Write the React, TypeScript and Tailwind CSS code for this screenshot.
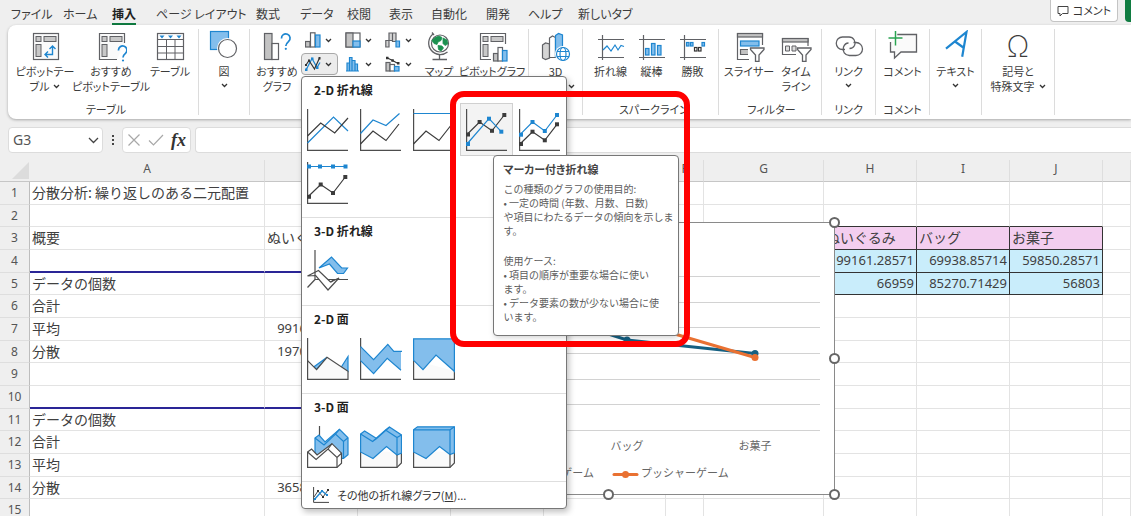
import type { ReactNode } from "react";

const GRAY = "#606165";
const BLUE = "#1e86d0";
const FILL = "#83beec";

/* ---------- small helpers ---------- */

function Chevron({ className = "" }: { className?: string }) {
  return (
    <svg width="7" height="5" viewBox="0 0 7 5" className={className} aria-hidden="true">
      <path d="M1 1l2.5 2.5L6 1" fill="none" stroke="#333" strokeWidth="1.3" />
    </svg>
  );
}

function Icon({ children, size = 32 }: { children: ReactNode; size?: number }) {
  return (
    <svg
      width={size}
      height={size}
      viewBox={`0 0 ${size} ${size}`}
      fill="none"
      stroke={GRAY}
      strokeWidth="1.2"
      className="block shrink-0"
      aria-hidden="true"
    >
      {children}
    </svg>
  );
}

/* ---------- ribbon icons ---------- */

const pivotBase = (
  <>
    <rect x="7" y="6.5" width="5" height="5" fill="#c8c8c8" strokeWidth="1" />
    <rect x="15" y="6.5" width="12" height="5" fill="#c8c8c8" strokeWidth="1" />
    <rect x="7" y="14.5" width="5" height="12" fill="#c8c8c8" strokeWidth="1" />
  </>
);

const PivotIcon = () => (
  <Icon>
    <rect x="4.5" y="3.5" width="25" height="26" fill="#fafafa" />
    {pivotBase}
    <path d="M23.5 16v8.5h-7.5M20.5 19l3-3 3 3M19 21.5l-3 3 3 3" stroke={BLUE} strokeWidth="1.4" />
  </Icon>
);

const RecPivotIcon = () => (
  <Icon>
    <path d="M22 29.5H4.5V3.5H29.5V13" fill="#fafafa" stroke="none" />
    <path d="M22 29.5H4.5V3.5H29.5V13" />
    {pivotBase}
    <path d="M23.5 20.5a4.200 4.200 0 1 1 7 2.800c-1.600 1.300-2.500 2-2.500 4.200" stroke={BLUE} strokeWidth="1.7" />
    <circle cx="28" cy="30.5" r="1.1" fill={BLUE} stroke="none" />
  </Icon>
);

const TableIcon = () => (
  <Icon>
    <rect x="3.5" y="3.5" width="26" height="26" fill="#fff" />
    <path d="M3.5 9.5h26M3.5 16.5h26M3.5 23h26M12.5 9.5v20M21 9.5v20" strokeWidth="1" />
    <path d="M5.5 5.500h5L8 8.500zM14 5.500h5l-2.500 3zM22.500 5.500h5l-2.500 3z" fill={BLUE} stroke="none" />
  </Icon>
);

const ShapesIcon = () => (
  <Icon>
    <rect x="2.5" y="1.5" width="18" height="18" fill={FILL} stroke={BLUE} />
    <circle cx="19.5" cy="18.5" r="10.5" fill="#fff" stroke="none" />
    <circle cx="19.5" cy="18.5" r="9" fill="#fff" />
  </Icon>
);

const RecChartIcon = () => (
  <Icon>
    <rect x="3.5" y="3.5" width="7.5" height="26" fill="#c3c3c3" />
    <rect x="11" y="13.5" width="6.5" height="16" fill="#fff" />
    <path d="M20.500 8.500a4.300 4.300 0 1 1 7 3c-1.700 1.400-2.700 2.200-2.700 4.500" stroke={BLUE} strokeWidth="1.7" />
    <circle cx="24.8" cy="18.8" r="1.1" fill={BLUE} stroke="none" />
  </Icon>
);

const MapIcon = () => (
  <Icon>
    <circle cx="17" cy="13.5" r="8.5" fill="#fff" />
    <path
      d="M12 7.500l4-1.500 3 1.500-1 3-3 1.500-1 2.500-3-1-2-3zM20 8l4 2 .8 4-2.800 1.500-2-2zM15 15.500l4 .5 1.500 2-2.500 3-2.500-1.500z"
      fill="#1c9150"
      stroke="#1c9150"
      strokeWidth=".8"
    />
    <path d="M10 4A11.500 11.500 0 0 0 24.500 22M9 2.500l2 2.500M16.500 25v4M9.500 29.500h14.500" strokeWidth="1.3" />
  </Icon>
);

const PivotChartIcon = () => (
  <Icon>
    <path d="M15 29.5H4.5V3.5H29.5V14" />
    {pivotBase}
    <rect x="17.5" y="23.5" width="4.5" height="7.5" fill="#c3c3c3" />
    <rect x="22" y="17.5" width="4.5" height="13.5" fill="#fff" />
    <rect x="26.5" y="20.5" width="4.5" height="10.5" fill={FILL} stroke={BLUE} />
  </Icon>
);

const Map3dIcon = () => (
  <Icon>
    <path d="M2.500 15l3-2 4 1v14l-4 1.500-3-1.500z" fill="#d5d5d5" />
    <path d="M9.500 8l3-2 3 1.500v20h-6z" fill="#fff" />
    <path d="M15.500 5.500l3-2 4 1.500v22h-7z" fill={FILL} stroke={BLUE} />
    <circle cx="23" cy="24" r="8" fill="#fff" stroke="none" />
    <g stroke={BLUE}>
      <circle cx="23" cy="24" r="6.5" />
      <ellipse cx="23" cy="24" rx="3" ry="6.5" />
      <path d="M17 21.500h12M17 26.500h12" />
    </g>
  </Icon>
);

const SparkAxes = () => <path d="M3 9.500h26M3 27.500h26M7.500 5v25" />;

const SparkLineIcon = () => (
  <Icon>
    <SparkAxes />
    <path d="M8 20l4-4 4 5 4-6 3 5 3-4.500 3 1" stroke={BLUE} />
  </Icon>
);

const SparkColumnIcon = () => (
  <Icon>
    <SparkAxes />
    <g fill={FILL} stroke={BLUE}>
      <rect x="9.5" y="18.5" width="3.5" height="6.5" />
      <rect x="15.5" y="13.5" width="3.5" height="11.5" />
      <rect x="21.5" y="15.5" width="3.5" height="9.5" />
    </g>
  </Icon>
);

const SparkWinLossIcon = () => (
  <Icon>
    <SparkAxes />
    <g fill={FILL} stroke={BLUE}>
      <rect x="9.5" y="12.5" width="2.5" height="3.5" />
      <rect x="13.5" y="12.5" width="2.5" height="3.5" />
      <rect x="25" y="12.5" width="2.5" height="3.5" />
    </g>
    <rect x="17.5" y="17.5" width="2.500" height="3.5" stroke="#333" />
    <rect x="21.5" y="17.5" width="2.500" height="3.5" stroke="#333" />
  </Icon>
);

const Funnel = () => (
  <path d="M17.500 18h13.500v1.500l-5 5.500v6.500h-3.500V25l-5-5.500z" fill="#fff" strokeWidth="1.3" />
);

const SlicerIcon = () => (
  <Icon>
    <path d="M16 29.5H4.5V3.5H29.5V15" />
    <rect x="4.5" y="3.5" width="25" height="3.5" fill="#c3c3c3" />
    <rect x="7.5" y="11" width="18.5" height="5" fill={FILL} stroke={BLUE} />
    <path d="M15 24.500H7.500v-5H15" fill="#c3c3c3" />
    <Funnel />
  </Icon>
);

const TimelineIcon = () => (
  <Icon>
    <path d="M16 24.500H2.500V8.500H28V16" />
    <rect x="2.5" y="8.5" width="25.5" height="3.5" fill="#c3c3c3" />
    <path d="M5.500 16h4v5h-4zM12 16h4v5h-4z" fill="#ddd" strokeWidth="1" />
    <Funnel />
  </Icon>
);

const LinkIcon = () => (
  <Icon>
    <path
      d="M12 19.500H9.500a6 6 0 0 1 0-12.500h6.500a6 6 0 0 1 5.500 8.500c-1 2-3 3-5 3M20.500 12.500h2.500a6.300 6.300 0 0 1 0 13h-6.500a6.300 6.300 0 0 1-6-8.500c1-2.500 3-4 5-4"
      strokeWidth="1.3"
    />
  </Icon>
);

const AddCommentIcon = () => (
  <Icon>
    <path d="M9 4.500h20.500v17.500H14l-6.500 6v-6H3.500V12" fill="#fafafa" strokeWidth="1.3" />
    <path d="M8.500 1v14M1.500 8h14" stroke="#fff" strokeWidth="3.5" />
    <path d="M8.500 1v14.500M1.500 8h14" stroke="#2aa351" strokeWidth="1.5" />
  </Icon>
);

const TextIcon = () => (
  <Icon>
    <path d="M6 18.700L26.500 2 22.200 26.700M15 11.500l9 6.500" stroke={BLUE} strokeWidth="2.2" />
  </Icon>
);

/* ---------- small chart-type icons ---------- */

const ColumnSmall = () => (
  <Icon size={16}>
    <rect x=".5" y="9.5" width="4.5" height="5.5" fill="#c3c3c3" />
    <rect x="5.5" y=".8" width="4.5" height="14.2" fill="#fff" />
    <rect x="10.500" y="3" width="4.5" height="12" fill={FILL} stroke={BLUE} />
  </Icon>
);

const TreemapSmall = () => (
  <Icon size={16}>
    <rect x="1" y="1" width="14" height="14" fill="#fff" />
    <rect x="1" y="1" width="7" height="14" fill="#c3c3c3" />
    <rect x="8" y="9" width="7" height="6" fill={FILL} stroke={BLUE} />
  </Icon>
);

const WaterfallSmall = () => (
  <Icon size={16}>
    <path d="M.8 8.500h3.200V15H.8zM4 1h3.500v7.500H4zM7.500 1H11v8.500H7.500z" fill="#d5d5d5" />
    <path d="M11 9h3.500v6H11z" fill={FILL} stroke={BLUE} />
  </Icon>
);

const LineSmall = () => (
  <Icon size={16}>
    <path d="M1 14l6-11.500 5 9 3-5" stroke={BLUE} strokeWidth="1.3" />
    <path d="M1 9l3-4.500 5.500 8.500L14.500 2" stroke="#333" />
    <path d="M0 12.500h2.500V15H0zM6 1.500h2.500V4H6zM11 10.500h2.500V13H11z" fill={BLUE} stroke="none" />
    <path d="M3 3.500h2V6H3zM13.500 1h2v2.500h-2zM0 8h2v2H0z" fill="#333" stroke="none" />
  </Icon>
);

const HistogramSmall = () => (
  <Icon size={16}>
    <path d="M2 15V7h2.500v8M4.500 15V1.500H7V15M7 15V4.500h3V15M10 15V8h2.500v7M1 15h13" fill={FILL} stroke={BLUE} />
  </Icon>
);

const ComboSmall = () => (
  <Icon size={16}>
    <rect x="1" y="6.5" width="4" height="8.5" fill="#c3c3c3" />
    <rect x="5" y="8.5" width="4.5" height="6.5" fill="#fff" />
    <rect x="9.5" y="10.5" width="4.5" height="4.5" fill={FILL} stroke={BLUE} />
    <path d="M2.500 2l5 2.500L13 7.500" stroke="#333" />
    <path d="M1 .8h2.500v2.500H1zM6.300 3.200h2.500v2.500H6.300zM12 6h2.500v2.500H12z" fill="#333" stroke="none" />
  </Icon>
);

/* ---------- gallery thumbnails ---------- */

function Thumb({ children, axes = true }: { children: ReactNode; axes?: boolean }) {
  return (
    <svg width="42" height="42" viewBox="0 0 42 42" fill="none" stroke="#4d4d4d" strokeWidth="1.2" aria-hidden="true">
      {axes && <path d="M.6 0v41.400H41" />}
      {children}
    </svg>
  );
}

function Series({ points, color, markers }: { points: number[][]; color: string; markers?: boolean }) {
  return (
    <>
      <polyline points={points.map((p) => p.join(",")).join(" ")} stroke={color} strokeWidth="1.2" />
      {markers &&
        points.map(([x, y]) => (
          <rect key={x} x={Math.max(x - 2, 0)} y={y - 2} width="4" height="4" fill={color} stroke="none" />
        ))}
    </>
  );
}

const DARK = "#3c3c3c";
const upper = [[0.5, 24.5], [13, 11], [26, 16.5], [39.5, 4.5]];
const lower = [[0.5, 35], [13, 22], [26, 31.5], [39, 15]];

const lineThumbs = [
  {
    name: "折れ線",
    art: (
      <Thumb>
        <Series color={BLUE} points={[[0.5, 34], [26.5, 8], [41, 22]]} />
        <Series color={DARK} points={[[0.5, 27], [13.7, 14], [27.7, 24], [41, 9]]} />
      </Thumb>
    ),
  },
  {
    name: "積み上げ折れ線",
    art: (
      <Thumb>
        <Series color={BLUE} points={upper} />
        <Series color={DARK} points={lower} />
      </Thumb>
    ),
  },
  {
    name: "100% 積み上げ折れ線",
    art: (
      <Thumb>
        <Series color={BLUE} points={[[0.5, 4.5], [41, 4.5]]} />
        <Series color={DARK} points={lower} />
      </Thumb>
    ),
  },
  {
    name: "マーカー付き折れ線",
    art: (
      <Thumb>
        <Series markers color={DARK} points={[[1, 25.5], [13.6, 13], [26, 21.8], [38.3, 6]]} />
        <Series markers color={BLUE} points={[[1, 35], [23, 9.7], [35.3, 22.7]]} />
      </Thumb>
    ),
  },
  {
    name: "マーカー付き積み上げ折れ線",
    art: (
      <Thumb>
        <Series markers color={BLUE} points={[[1, 25.7], [13.5, 13], [25.8, 22], [38, 6]]} />
        <Series markers color={DARK} points={[[1, 35], [13.5, 22.7], [25.8, 31.3], [38, 15.3]]} />
      </Thumb>
    ),
  },
  {
    name: "マーカー付き 100% 積み上げ折れ線",
    art: (
      <Thumb>
        <Series markers color={BLUE} points={[[1, 4.5], [13, 4.5], [26, 4.5], [38.5, 4.5]]} />
        <Series markers color={DARK} points={[[1, 34.8], [13.7, 22.5], [26, 31], [38.3, 15]]} />
      </Thumb>
    ),
  },
];

const line3dThumbs = [
  {
    name: "3-D 折れ線",
    art: (
      <Thumb axes={false}>
        <path d="M8 0v29.500h33M8 29.500L.5 37.500" />
        <path d="M12 18L24.500 7l10.200 10.800L40.500 18l-4 5.500h-6L22.500 14z" fill={FILL} stroke={BLUE} />
        <path d="M.5 26l11-5.500L23.500 32l8.500-4L21 40 8.700 25.500z" fill="#fff" />
        <path d="M8 22v4M24 32l3-2.500h-5" />
      </Thumb>
    ),
  },
];

const areaThumbs = [
  {
    name: "面",
    art: (
      <Thumb>
        <path d="M7 28.700L20 19.300 9.300 31.700zM34 29.500l7-11v15z" fill={FILL} stroke={BLUE} />
        <path d="M.6 22.700l9 9L20 19.300l21 14v8.100H.6z" fill="#fafafa" />
      </Thumb>
    ),
  },
  {
    name: "積み上げ面",
    art: (
      <Thumb>
        <path
          d="M.6 8.700l13 13L27.800 6.300l6 7H41v19L27.200 20.300 13.500 35.700.6 22.700"
          fill={FILL}
          stroke="none"
        />
        <path d="M.6 8.700l13 13L27.800 6.300l6 7H42M.6 22.700l13 13L27.200 20.300 41 32.300" stroke={BLUE} />
      </Thumb>
    ),
  },
  {
    name: "100% 積み上げ面",
    art: (
      <Thumb axes={false}>
        <path d="M.6 22v19.400h40.800V33" fill="#fafafa" />
        <path d="M.6.8h40.800v32.500L23 17 10 31.700.6 22.300z" fill={FILL} stroke={BLUE} />
      </Thumb>
    ),
  },
];

const area3dThumbs = [
  {
    name: "3-D 面",
    art: (
      <Thumb axes={false}>
        <path d="M12.500 0v10" />
        <path d="M8 12l4-3 6 7L32.500 3.300l8.500 8.500v17l-4.500 3.500H8z" fill={FILL} stroke={BLUE} />
        <path d="M8 12l9 7L28.500 8l8 7.500 4.500-3.700M36.500 15.500v17M28.500 8l4-4.700" stroke={BLUE} />
        <path d="M.6 26l4-3 5.500 6L25 17.700l9.500 9.500v10L30 41.400H.6z" fill="#fff" />
        <path d="M.6 26l8.500 7.500L21 23l9 8.500 4.500-4.300M30 31.500v10M21 23l4-5.300" />
      </Thumb>
    ),
  },
  {
    name: "3-D 積み上げ面",
    art: (
      <Thumb axes={false}>
        <path d="M.6 25v16.400H37l4.400-4.400V26" fill="#fafafa" />
        <path d="M.6 8l4-3 12 7.500L29.500 1l12 8v18L37 29l-10.500-8.500L13 32.500.6 26z" fill={FILL} stroke={BLUE} />
        <path d="M.6 8l12 7.500 4-3M12.600 15.500L25.500 4 37 11.500l4.400-2.500M25.500 4l4-3M37 11.500V29" stroke={BLUE} />
        <path d="M37 29v12.400" />
      </Thumb>
    ),
  },
  {
    name: "3-D 100% 積み上げ面",
    art: (
      <Thumb axes={false}>
        <path d="M.6 25v16.400H37l4.400-4.400V26" fill="#fafafa" />
        <path d="M.6 3.800L4.500.8h36.900v26L37 28.500l-10.500-8L13 32.500.6 26z" fill={FILL} stroke={BLUE} />
        <path d="M.6 3.800H37l4.400-3M37 3.800v24.700" stroke={BLUE} />
        <path d="M37 28.500v12.900" />
      </Thumb>
    ),
  },
];

const gallery = [
  { title: "2-D 折れ線", items: lineThumbs },
  { title: "3-D 折れ線", items: line3dThumbs },
  { title: "2-D 面", items: areaThumbs },
  { title: "3-D 面", items: area3dThumbs },
];

/* ---------- ribbon ---------- */

const tabs = [
  { label: "ファイル", width: "w-[52px]" },
  { label: "ホーム", width: "w-[49px]" },
  { label: "挿入", width: "w-[44px]", active: true },
  { label: "ページ レイアウト", width: "w-[100px]" },
  { label: "数式", width: "w-[44px]" },
  { label: "データ", width: "w-[47px]" },
  { label: "校閲", width: "w-[42px]" },
  { label: "表示", width: "w-[42px]" },
  { label: "自動化", width: "w-[55px]" },
  { label: "開発", width: "w-[42px]" },
  { label: "ヘルプ", width: "w-[50px]" },
  { label: "新しいタブ", width: "w-[60px]" },
];

function TabBar() {
  return (
    <nav className="flex h-[25px] items-start pl-[11px]">
      {tabs.map((tab) => (
        <button key={tab.label} className={`${tab.width} h-[22px] shrink-0 text-left whitespace-nowrap`}>
          <span
            className={
              tab.active
                ? "inline-block h-[22px] border-b-2 border-[#107c41] text-xs leading-[22px] font-bold text-[#222]"
                : "inline-block text-xs leading-[22px] text-[#3c3c3c]"
            }
          >
            {tab.label}
          </span>
        </button>
      ))}
      <button className="ml-auto flex h-[22px] w-[68px] shrink-0 items-center justify-center gap-1 rounded-b border border-t-0 border-[#c4c4c4] bg-white text-[11px] text-[#333]">
        <svg width="12" height="12" viewBox="0 0 12 12" fill="none" stroke="#444" aria-hidden="true">
          <path d="M1 1.500h10v7H5.500L3 11V8.500H1z" />
        </svg>
        コメント
      </button>
      <button aria-label="共有" className="ml-[7px] h-[22px] w-[6px] shrink-0 rounded-bl bg-[#107c41]" />
    </nav>
  );
}

function BigButton({ icon, lines, width, chevron }: { icon: ReactNode; lines: string[]; width: string; chevron?: "inline" | "below" }) {
  return (
    <button className={`${width} flex shrink-0 flex-col items-center pt-px text-[11px] leading-[15px] whitespace-nowrap text-[#3c3c3c]`}>
      {icon}
      <span className="mt-0.5 flex flex-col items-center">
        {lines.map((line, i) => (
          <span key={line} className="flex items-center gap-1">
            {line}
            {chevron === "inline" && i === lines.length - 1 && <Chevron />}
          </span>
        ))}
        {chevron === "below" && <Chevron className="mt-1" />}
      </span>
    </button>
  );
}

function Group({ label, width, pad = "", children }: { label?: string; width: string; pad?: string; children: ReactNode }) {
  return (
    <div className={`${width} ${pad} flex shrink-0 flex-col justify-between border-r border-[#dcdcdc]`}>
      <div className="flex">{children}</div>
      {label && <div className="text-center text-[11px] leading-[11px] whitespace-nowrap text-[#3c3c3c]">{label}</div>}
    </div>
  );
}

function SmallButton({ icon, label }: { icon: ReactNode; label: string }) {
  return (
    <button aria-label={label} className="flex h-[22px] w-[37px] items-center gap-1 pl-1">
      {icon}
      <Chevron />
    </button>
  );
}

function ChartTip() {
  return (
    <div
      role="tooltip"
      className="absolute top-[52px] left-[33px] z-10 h-[181px] w-[186px] rounded border border-[#777] bg-white px-[9px] py-1 text-left text-[10px] leading-[14px] whitespace-nowrap text-[#5c5c5c] shadow-md [font-feature-settings:normal]"
    >
      <p className="mt-0.5 text-[11px] font-bold text-[#444] [font-feature-settings:'palt']">マーカー付き折れ線</p>
      <p className="mt-1.5">
        この種類のグラフの使用目的:
        <br />• 一定の時間 (年数、月数、日数)
        <br />
        や項目にわたるデータの傾向を示しま
        <br />
        す。
      </p>
      <p className="mt-4">
        使用ケース:
        <br />• 項目の順序が重要な場合に使い
        <br />
        ます。
        <br />• データ要素の数が少ない場合に使
        <br />
        います。
      </p>
    </div>
  );
}

function ChartMenu() {
  return (
    <div className="absolute top-[23px] left-0 w-[266px] rounded border border-[#777] bg-white shadow-[2px_3px_6px_rgba(0,0,0,0.25)]">
      {gallery.map((section) => (
        <section key={section.title} className="border-b border-[#dedede] pb-2">
          <h3 className="pl-[12px] text-xs leading-[26px] font-bold text-[#222]">{section.title}</h3>
          <div className="grid grid-cols-5">
            {section.items.map((item) => {
              const hovered = item.name === "マーカー付き折れ線";
              return (
                <div key={item.name} className="relative">
                  <button
                    aria-label={item.name}
                    className={
                      hovered
                        ? "flex h-[53px] w-full items-center justify-center border border-[#d0d0d0] bg-[#f3f3f3]"
                        : "flex h-[53px] w-full items-center justify-center"
                    }
                  >
                    {item.art}
                  </button>
                  {hovered && <ChartTip />}
                </div>
              );
            })}
          </div>
        </section>
      ))}
      <button className="flex h-[26px] w-full items-center gap-2 pl-[11px] text-[11px] text-[#333]">
        <svg width="16" height="16" viewBox="0 0 16 16" fill="none" stroke="#444" aria-hidden="true">
          <path d="M.6 0v15.400H16" />
          <path d="M1 10l4-6 5 6 5-7" />
          <path d="M1 13l8-9 5 4" stroke={BLUE} strokeWidth="1.3" />
          <path d="M4 3h2v2H4zM9 9h2v2H9zM14 2h2v2h-2z" fill="#333" stroke="none" />
          <path d="M8 3h2v2H8zM13 7h2v2h-2zM1 11h2v2H1z" fill={BLUE} stroke="none" />
        </svg>
        <span>
          その他の折れ線グラフ(<u>M</u>)...
        </span>
      </button>
    </div>
  );
}

function Ribbon() {
  return (
    <div className="relative z-20 ml-2 flex h-[94px] rounded-l-lg bg-white py-1 shadow-[0_1px_3px_rgba(0,0,0,0.3)]">
      <Group label="テーブル" width="w-[191px]" pad="pl-1.5">
        <BigButton icon={<PivotIcon />} lines={["ピボットテー", "ブル"]} width="w-[62px]" chevron="inline" />
        <BigButton icon={<RecPivotIcon />} lines={["おすすめ", "ピボットテーブル"]} width="w-[70px]" />
        <BigButton icon={<TableIcon />} lines={["テーブル"]} width="w-[48px]" />
      </Group>
      <Group width="w-[51px]">
        <BigButton icon={<ShapesIcon />} lines={["図"]} width="w-[50px]" chevron="below" />
      </Group>
      <Group width="w-[279px]" pad="pl-[3px]">
        <BigButton icon={<RecChartIcon />} lines={["おすすめ", "グラフ"]} width="w-[48px]" />
        <div className="grid grid-cols-[37px_37px_37px] content-start gap-x-[3px] gap-y-0.5">
          <SmallButton icon={<ColumnSmall />} label="縦棒/横棒グラフの挿入" />
          <SmallButton icon={<TreemapSmall />} label="階層構造グラフの挿入" />
          <SmallButton icon={<WaterfallSmall />} label="ウォーターフォール図の挿入" />
          <div className="relative">
            <button
              aria-label="折れ線/面グラフの挿入"
              aria-expanded="true"
              className="flex h-[22px] w-[37px] items-center gap-1 rounded border border-[#a9a9a9] bg-[#ececec] pl-[3px]"
            >
              <LineSmall />
              <Chevron />
            </button>
            <ChartMenu />
          </div>
          <SmallButton icon={<HistogramSmall />} label="統計グラフの挿入" />
          <SmallButton icon={<ComboSmall />} label="複合グラフの挿入" />
        </div>
        <BigButton icon={<MapIcon />} lines={["マップ"]} width="w-[42px]" />
        <BigButton icon={<PivotChartIcon />} lines={["ピボットグラフ"]} width="w-[64px]" />
      </Group>
      <Group width="w-[54px]">
        <BigButton icon={<Map3dIcon />} lines={["3D", "マップ"]} width="w-[53px]" chevron="inline" />
      </Group>
      <Group label="スパークライン" width="w-[136px]" pad="pl-[7px]">
        <BigButton icon={<SparkLineIcon />} lines={["折れ線"]} width="w-[41px]" />
        <BigButton icon={<SparkColumnIcon />} lines={["縦棒"]} width="w-[41px]" />
        <BigButton icon={<SparkWinLossIcon />} lines={["勝敗"]} width="w-[41px]" />
      </Group>
      <Group label="フィルター" width="w-[103px]" pad="pl-[3px]">
        <BigButton icon={<SlicerIcon />} lines={["スライサー"]} width="w-[54px]" />
        <BigButton icon={<TimelineIcon />} lines={["タイム", "ライン"]} width="w-[40px]" />
      </Group>
      <Group label="リンク" width="w-[54px]">
        <BigButton icon={<LinkIcon />} lines={["リンク"]} width="w-[53px]" chevron="below" />
      </Group>
      <Group label="コメント" width="w-[54px]">
        <BigButton icon={<AddCommentIcon />} lines={["コメント"]} width="w-[53px]" />
      </Group>
      <Group width="w-[52px]">
        <BigButton icon={<TextIcon />} lines={["テキスト"]} width="w-[51px]" chevron="below" />
      </Group>
      <Group width="w-[73px]">
        <BigButton
          icon={<span className="h-8 font-['Inter',sans-serif] text-[30px] leading-8 font-extralight">Ω</span>}
          lines={["記号と", "特殊文字"]}
          width="w-[72px]"
          chevron="inline"
        />
      </Group>
    </div>
  );
}

/* ---------- formula bar ---------- */

function FormulaBar() {
  return (
    <div className="mt-2 flex h-[26px] items-stretch pl-2">
      <div className="flex w-[95px] shrink-0 items-center rounded border border-[#dcdcdc] bg-white">
        <input
          aria-label="名前ボックス"
          defaultValue="G3"
          className="w-[79px] bg-transparent pl-1 font-['Noto_Sans',sans-serif] text-sm text-[#555] outline-none"
        />
        <svg width="11" height="7" viewBox="0 0 11 7" aria-hidden="true">
          <path d="M1 1l4.500 4.500L10 1" fill="none" stroke="#444" strokeWidth="1.3" />
        </svg>
      </div>
      <div className="flex w-[19px] shrink-0 flex-col items-center justify-center gap-0.5">
        <span className="size-0.5 bg-[#444]" />
        <span className="size-0.5 bg-[#444]" />
        <span className="size-0.5 bg-[#444]" />
      </div>
      <div className="flex w-[69px] shrink-0 items-center justify-between rounded border border-[#dcdcdc] bg-white px-1">
        <button aria-label="キャンセル">
          <svg width="14" height="14" viewBox="0 0 14 14" aria-hidden="true">
            <path d="M1.500 1.500l11 11M12.500 1.500l-11 11" stroke="#a8a8a8" strokeWidth="1.2" />
          </svg>
        </button>
        <button aria-label="入力">
          <svg width="16" height="12" viewBox="0 0 16 12" fill="none" aria-hidden="true">
            <path d="M1 6.500l4.500 4.500L15 1" stroke="#a8a8a8" strokeWidth="1.2" />
          </svg>
        </button>
        <button
          aria-label="関数の挿入"
          className="font-['Liberation_Serif',serif] text-lg leading-5 font-bold text-[#333] italic"
        >
          fx
        </button>
      </div>
      <input
        aria-label="数式バー"
        className="ml-1 min-w-0 flex-1 rounded-l border border-r-0 border-[#dcdcdc] bg-white outline-none"
      />
    </div>
  );
}

/* ---------- worksheet ---------- */

const columns = ["A", "B", "C", "D", "E", "F", "G", "H", "I", "J", ""];

const cells: Record<string, string> = {
  A1: "分散分析: 繰り返しのある二元配置",
  A3: "概要",
  B3: "ぬいぐるみ",
  A5: "データの個数",
  A6: "合計",
  A7: "平均",
  B7: "99161.28571",
  A8: "分散",
  B8: "19704169.52",
  A11: "データの個数",
  A12: "合計",
  A13: "平均",
  A14: "分散",
  B14: "36584082.14",
  H3: "ぬいぐるみ",
  I3: "バッグ",
  J3: "お菓子",
  H4: "99161.28571",
  I4: "69938.85714",
  J4: "59850.28571",
  H5: "66959",
  I5: "85270.71429",
  J5: "56803",
};

function cellStyle(col: string, row: number) {
  const data = col === "H" || col === "I" || col === "J";
  if (data && row === 3) return "border-r border-b border-[#333] bg-[#f3ceef]";
  if (data && (row === 4 || row === 5)) return "border-r border-b border-[#333] bg-[#c9edfb]";
  if (data && row === 2) return "border-r border-b border-r-[#e3e3e3] border-b-[#333]";
  if (col && "ABCD".includes(col) && (row === 4 || row === 10))
    return "border-r border-b-2 border-r-[#e3e3e3] border-b-[#2a2596]";
  return "border-r border-b border-[#e3e3e3]";
}

function Sheet() {
  return (
    <table className="w-full table-fixed border-separate border-spacing-0 [font-feature-settings:normal]">
      <colgroup>
        <col className="w-[30px]" />
        <col className="w-[235px]" />
        <col className="w-[93px]" />
        <col className="w-[93px]" />
        <col className="w-[93px]" />
        <col className="w-[122px]" />
        <col className="w-[38px]" />
        <col className="w-[120px]" />
        <col className="w-[93px]" />
        <col className="w-[93px]" />
        <col className="w-[93px]" />
        <col />
      </colgroup>
      <thead>
        <tr className="h-[22px] bg-[#efefef]">
          <th className="border-b border-[#c6c6c6] p-0">
            <svg width="18" height="18" viewBox="0 0 18 18" className="ml-auto block" aria-hidden="true">
              <path d="M17 0v17H0z" fill="#dcdcdc" />
            </svg>
          </th>
          {columns.map((c, i) => (
            <th
              key={i}
              className="border-r border-b border-r-[#dedede] border-b-[#c6c6c6] p-0 pb-1 font-['Noto_Sans',sans-serif] text-xs leading-[17px] font-normal text-[#555]"
            >
              {c}
            </th>
          ))}
        </tr>
      </thead>
      <tbody>
        {Array.from({ length: 15 }, (_, i) => i + 1).map((row) => (
          <tr key={row} className="h-[23px] nth-[3n+2]:h-[22px]">
            <th className="border-r border-b border-r-[#bdbdbd] border-b-[#dedede] bg-[#efefef] p-0 font-['Noto_Sans',sans-serif] text-xs leading-[20px] font-normal text-[#555]">
              {row}
            </th>
            {columns.map((c, i) => {
              const text = cells[c + row] ?? "";
              const numeric = /^\d/.test(text);
              return (
                <td
                  key={i}
                  className={`${cellStyle(c, row)} overflow-hidden px-0.5 py-0 align-top leading-[20px] whitespace-nowrap text-[#404040] ${
                    numeric ? "text-right font-['Noto_Sans',sans-serif] text-[13px]" : "text-sm"
                  }`}
                >
                  {text}
                </td>
              );
            })}
          </tr>
        ))}
      </tbody>
    </table>
  );
}

function ChartObject() {
  const grid = [54, 80, 105, 131, 157, 182, 208];
  return (
    <svg
      width="453"
      height="273"
      viewBox="0 0 453 273"
      className="absolute top-[62px] left-[382px] overflow-visible [font-feature-settings:normal]"
      role="img"
      aria-label="折れ線グラフ"
    >
      <rect x=".5" y=".5" width="452" height="272" fill="#fff" stroke="#8a8a8a" />
      {grid.map((y) => (
        <path key={y} d={`M40 ${y + 0.5}H438`} stroke="#d2d2d2" />
      ))}
      <g fill="none" strokeWidth="3">
        <path d="M117 77L245 118 373 131.500" stroke="#156082" />
        <path d="M117 60L245 98 373 135.500" stroke="#e97132" />
      </g>
      <circle cx="245" cy="118" r="3.5" fill="#156082" />
      <circle cx="373" cy="131.5" r="3.5" fill="#156082" />
      <circle cx="373" cy="135.5" r="3.5" fill="#e97132" />
      <g fontSize="11" fill="#666">
        <text x="245" y="228" textAnchor="middle">バッグ</text>
        <text x="373" y="228" textAnchor="middle">お菓子</text>
        <text x="212" y="255" textAnchor="end">クレーンゲーム</text>
        <text x="259" y="255">プッシャーゲーム</text>
      </g>
      <path d="M232 252.500h23" stroke="#e97132" strokeWidth="3" strokeLinecap="round" />
      <circle cx="243.5" cy="252.5" r="3.5" fill="#e97132" />
      <g fill="#fff" stroke="#666" strokeWidth="2">
        <circle cx="452.5" cy=".5" r="4.5" />
        <circle cx="452.5" cy="136.5" r="4.5" />
        <circle cx="452.5" cy="272.5" r="4.5" />
        <circle cx="226.5" cy="272.5" r="4.5" />
      </g>
    </svg>
  );
}

export default function App() {
  return (
    <div className="relative h-screen overflow-hidden bg-[#efefef] font-['Noto_Sans_CJK_JP',sans-serif] [font-feature-settings:'palt']">
      <TabBar />
      <Ribbon />
      <FormulaBar />
      <main className="relative mt-[7px] bg-white">
        <Sheet />
        <ChartObject />
      </main>
      {/* highlight around the hovered chart type */}
      <div className="pointer-events-none absolute top-[91px] left-[450px] z-30 h-[256px] w-[240px] rounded-[14px] border-[6px] border-[#ff0000]" />
    </div>
  );
}
